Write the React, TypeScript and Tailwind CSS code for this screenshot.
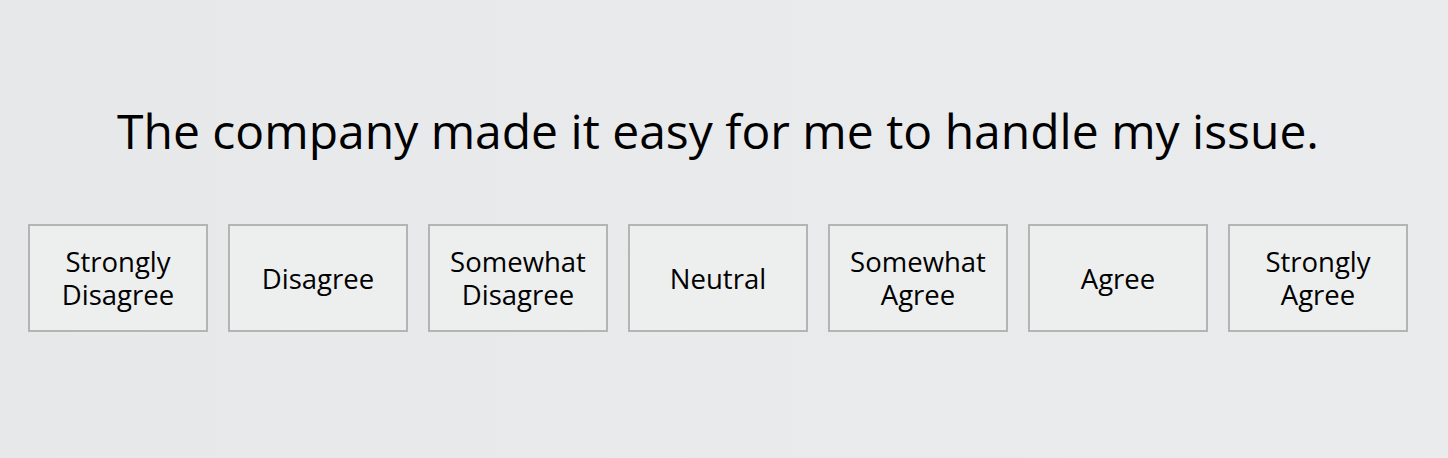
const options = [
  ['Strongly', 'Disagree'],
  ['Disagree'],
  ['Somewhat', 'Disagree'],
  ['Neutral'],
  ['Somewhat', 'Agree'],
  ['Agree'],
  ['Strongly', 'Agree'],
]

export default function App() {
  return (
    <div
      className="h-[458px] w-full overflow-hidden bg-gradient-to-r from-[#e7e8ea] via-[#e9eaec] to-[#eaebec] text-black"
      style={{ fontFamily: '"Open Sans", sans-serif' }}
    >
      <div className="ml-[28px] w-[1380px] pt-[99px]">
        <h1 className="text-center text-[48px] leading-[64px] font-normal">
          The company made it easy for me to handle my issue.
        </h1>
        <div className="mt-[61px] flex gap-[20px]">
          {options.map((lines, i) => (
            <button
              key={i}
              className="flex h-[108px] w-[180px] flex-col items-center justify-center border-2 border-[#b4b4b4] bg-[#edeeee] text-[27.5px] leading-[33px]"
            >
              {lines.map((l) => (
                <span key={l}>{l}</span>
              ))}
            </button>
          ))}
        </div>
      </div>
    </div>
  )
}
